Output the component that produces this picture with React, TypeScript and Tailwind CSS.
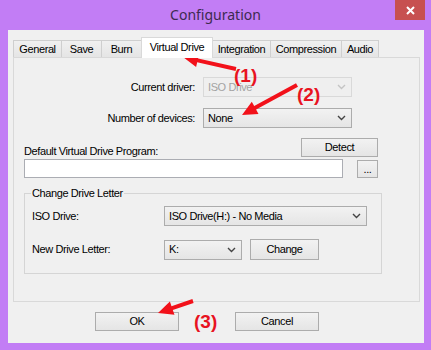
import React from "react";

function arrowPoints(x1: number, y1: number, x2: number, y2: number, shaft = 4, headW = 14, headL = 15) {
  const dx = x2 - x1;
  const dy = y2 - y1;
  const len = Math.sqrt(dx * dx + dy * dy);
  const ux = dx / len;
  const uy = dy / len;
  const px = -uy;
  const py = ux;
  const bx = x2 - ux * headL;
  const by = y2 - uy * headL;
  const pts: [number, number][] = [
    [x1 + (px * shaft) / 2, y1 + (py * shaft) / 2],
    [bx + (px * shaft) / 2, by + (py * shaft) / 2],
    [bx + (px * headW) / 2, by + (py * headW) / 2],
    [x2, y2],
    [bx - (px * headW) / 2, by - (py * headW) / 2],
    [bx - (px * shaft) / 2, by - (py * shaft) / 2],
    [x1 - (px * shaft) / 2, y1 - (py * shaft) / 2],
  ];
  return pts.map((p) => `${p[0].toFixed(1)},${p[1].toFixed(1)}`).join(" ");
}

function Chevron({ disabled = false }: { disabled?: boolean }) {
  return (
    <svg width="9" height="6" viewBox="0 0 9 6" className="shrink-0">
      <path d="M1 1 L4.5 4.5 L8 1" fill="none" stroke={disabled ? "#C4C4C4" : "#444"} strokeWidth="1.4" />
    </svg>
  );
}

function Combo({ text, w, disabled = false }: { text: string; w: string; disabled?: boolean }) {
  return (
    <div
      className={`${w} h-[20px] flex items-center justify-between pl-[4px] pr-[5px] border ${
        disabled
          ? "border-[#D9D9D9] bg-[#EFEFEF] text-[#A3A3A3]"
          : "border-[#ACACAC] bg-gradient-to-b from-[#F2F2F2] to-[#E5E5E5] text-black"
      }`}
    >
      <span>{text}</span>
      <Chevron disabled={disabled} />
    </div>
  );
}

function Btn({ text, w, h = "h-[20px]" }: { text: string; w: string; h?: string }) {
  return (
    <div
      className={`${w} ${h} flex items-center justify-center border border-[#ACACAC] bg-gradient-to-b from-[#F2F2F2] to-[#E5E5E5] text-black`}
    >
      {text}
    </div>
  );
}

function Tab({ label, w, active = false, first = false }: { label: string; w: string; active?: boolean; first?: boolean }) {
  return (
    <div
      className={`${w} ${first ? "" : "-ml-px"} flex items-center justify-center border-l border-t border-r ${
        active
          ? "h-[21px] -mb-px relative z-10 bg-white border-[#D9D9D9] pb-[2px]"
          : "h-[17px] bg-gradient-to-b from-[#F0F0F0] to-[#E5E5E5] border-[#CFCFCF]"
      }`}
    >
      {label}
    </div>
  );
}

export default function App() {
  return (
    <div className="relative w-[431px] h-[350px] bg-[#C27DF5] overflow-hidden font-['Liberation_Sans',Arial,sans-serif] text-[11px] tracking-[-0.4px] text-black leading-[13px]">
      {/* Title bar */}
      <div className="relative h-[30px] flex items-center justify-center">
        <span className="font-['Noto_Sans',sans-serif] text-[14px] tracking-normal text-[#3D2A50] leading-none -mt-[1px]">
          Configuration
        </span>
        <div className="absolute right-[6px] top-0 w-[30px] h-[20px] bg-[#C75050] flex items-center justify-center">
          <svg width="9" height="9" viewBox="0 0 9 9">
            <path d="M1 1 L8 8 M8 1 L1 8" stroke="white" strokeWidth="2" />
          </svg>
        </div>
      </div>

      {/* Client */}
      <div className="ml-[8px] mr-[7px] h-[313px] bg-[#F0F0F0] flex flex-col pl-[5px] pr-[4px] pt-[7px]">
        {/* Tabs */}
        <div className="flex items-end h-[20px]">
          <Tab label="General" w="w-[49px]" first />
          <Tab label="Save" w="w-[41px]" />
          <Tab label="Burn" w="w-[41px]" />
          <Tab label="Virtual Drive" w="w-[72px]" active />
          <Tab label="Integration" w="w-[59px]" />
          <Tab label="Compression" w="w-[72px]" />
          <Tab label="Audio" w="w-[38px]" />
        </div>

        {/* Panel */}
        <div className="h-[245px] border border-[#D9D9D9] bg-[#F0F0F0] flex flex-col pt-[19px]">
          <div className="flex items-center">
            <div className="w-[181px] text-right">Current driver:</div>
            <div className="ml-[8px]">
              <Combo text="ISO Drive" w="w-[149px]" disabled />
            </div>
          </div>
          <div className="flex items-center mt-[11px]">
            <div className="w-[181px] text-right">Number of devices:</div>
            <div className="ml-[8px]">
              <Combo text="None" w="w-[149px]" />
            </div>
          </div>

          <div className="flex items-end mt-[10px] pl-[10px]">
            <div className="w-[277px] -mb-[1px]">Default Virtual Drive Program:</div>
            <Btn text="Detect" w="w-[77px]" h="h-[19px]" />
          </div>

          <div className="flex items-start mt-[2px] pl-[10px]">
            <div className="w-[319px] h-[19px] bg-white border border-[#ABADB3]" />
            <div className="ml-[14px] mt-[1px]">
              <Btn text="..." w="w-[21px]" h="h-[18px]" />
            </div>
          </div>

          <fieldset className="ml-[10px] mt-[9px] w-[358px] h-[87px] border border-[#D5D5D5] px-[7px]">
            <legend className="px-[1px] -ml-[1px]">Change Drive Letter</legend>
            <div className="flex items-center mt-[6px]">
              <div className="w-[132px]">ISO Drive:</div>
              <Combo text="ISO Drive(H:) - No Media" w="w-[203px]" />
            </div>
            <div className="flex items-center mt-[13px]">
              <div className="w-[132px]">New Drive Letter:</div>
              <Combo text="K:" w="w-[78px]" />
              <div className="ml-[8px]">
                <Btn text="Change" w="w-[69px]" h="h-[21px]" />
              </div>
            </div>
          </fieldset>
        </div>

        {/* Bottom buttons */}
        <div className="flex items-center mt-[10px] pl-[82px]">
          <Btn text="OK" w="w-[84px]" h="h-[19px]" />
          <div className="ml-[56px]">
            <Btn text="Cancel" w="w-[84px]" h="h-[19px]" />
          </div>
        </div>
      </div>

      {/* Annotations overlay */}
      <svg className="absolute left-0 top-0 pointer-events-none" width="431" height="350" viewBox="0 0 431 350">
        <polygon points={arrowPoints(236, 69, 183, 57)} fill="#F2111A" />
        <polygon points={arrowPoints(297, 85, 242, 115)} fill="#F2111A" />
        <polygon points={arrowPoints(193, 301, 158, 313)} fill="#F2111A" />
      </svg>
      <div className="absolute left-[234px] top-[66px] text-[19px] font-bold text-[#E8131F] tracking-normal leading-[20px]">(1)</div>
      <div className="absolute left-[297px] top-[85px] text-[19px] font-bold text-[#E8131F] tracking-normal leading-[20px]">(2)</div>
      <div className="absolute left-[194px] top-[312px] text-[19px] font-bold text-[#E8131F] tracking-normal leading-[20px]">(3)</div>
    </div>
  );
}
